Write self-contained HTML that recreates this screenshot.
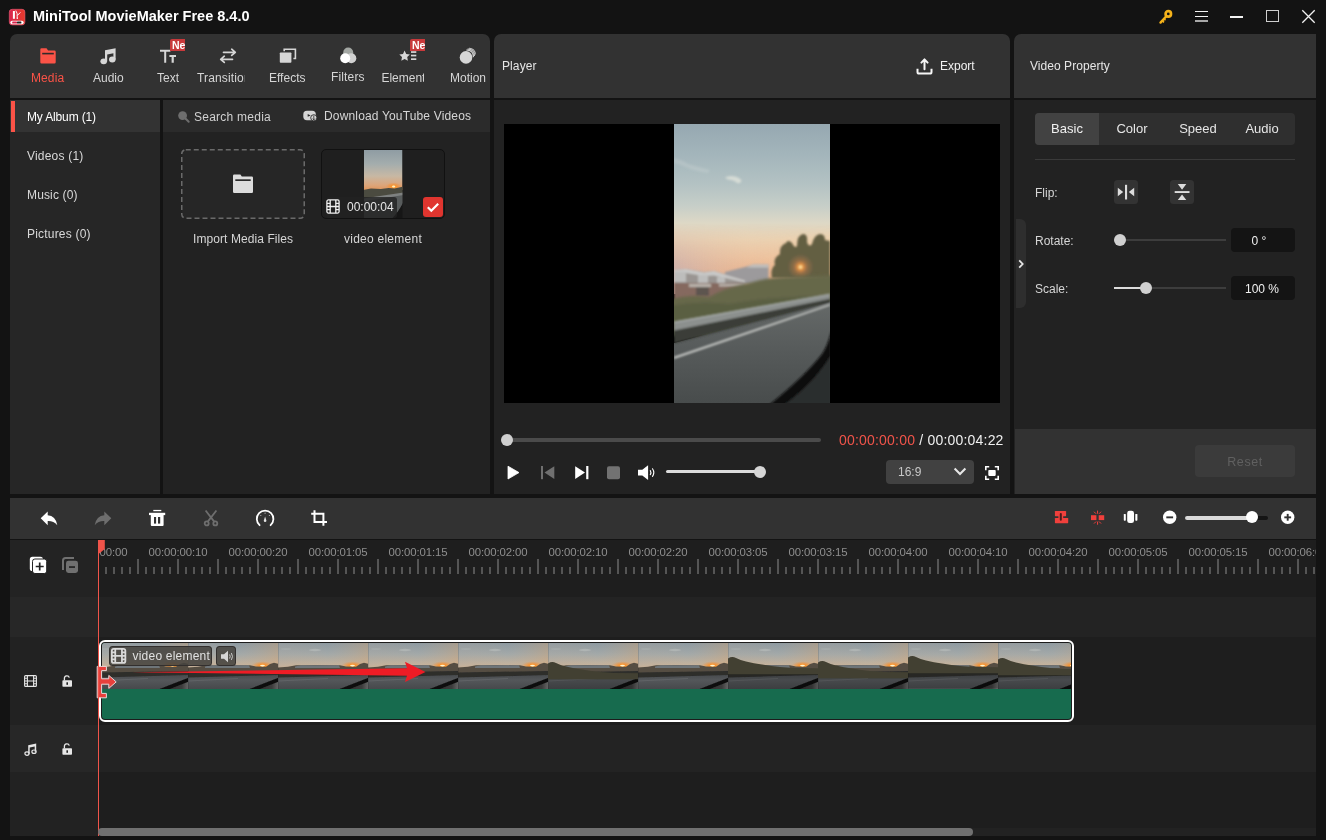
<!DOCTYPE html>
<html lang="en">
<head>
<meta charset="utf-8">
<title>MiniTool MovieMaker Free 8.4.0</title>
<style>
*{box-sizing:border-box;margin:0;padding:0}
html,body{width:1326px;height:840px;overflow:hidden;background:#131313}
body{position:relative;font-family:"Liberation Sans",Arial,sans-serif;font-size:12px;color:#e0e0e0;-webkit-font-smoothing:antialiased}
.abs{position:absolute}
.t{position:absolute;white-space:nowrap;line-height:16px}
svg{position:absolute;overflow:visible}
/* title */
#title{left:33px;top:7px;font-weight:bold;font-size:14.5px;line-height:18px;color:#fff}
/* panels */
.hdr{background:#323232;border-radius:7px 7px 0 0}
.body{background:#222222}
/* tabs */
.tab{position:absolute;top:69px;width:70px;text-align:center;font-size:12px;line-height:16px;color:#d6d6d6;white-space:nowrap}
.side{position:absolute;left:27px;font-size:12px;line-height:16px;color:#d8d8d8;white-space:nowrap}
.new{position:absolute;width:15px;height:11px;background:#c8393b;color:#fff;font-weight:bold;font-size:10.5px;line-height:12px;height:12px;overflow:hidden;padding-left:2px;border-radius:2px 0 0 0}
.rl{position:absolute;top:543.600px;width:80px;text-align:center;font-size:11.4px;line-height:16px;color:#8e8e8e;white-space:nowrap;letter-spacing:-0.1px}
</style>
</head>
<body>
<div id="app" style="position:absolute;left:0;top:0;width:1326px;height:840px;will-change:transform;transform:translateZ(0)">

<svg width="0" height="0" style="position:absolute;left:0;top:0">
<defs>
<linearGradient id="sky" x1="0" y1="0" x2="0" y2="1">
<stop offset="0" stop-color="#96a8b1"/><stop offset="0.18" stop-color="#a3b5bb"/><stop offset="0.35" stop-color="#b3c2c3"/><stop offset="0.48" stop-color="#c6cec8"/><stop offset="0.58" stop-color="#ddd8c6"/><stop offset="0.68" stop-color="#ecd3b3"/><stop offset="0.78" stop-color="#f0c5a0"/><stop offset="0.87" stop-color="#eeb48c"/><stop offset="1" stop-color="#e6a07a"/>
</linearGradient>
<linearGradient id="skyx" x1="0" y1="0" x2="1" y2="0"><stop offset="0" stop-color="#c4b0b4" stop-opacity=".7"/><stop offset="0.5" stop-color="#dcbca4" stop-opacity=".2"/><stop offset="1" stop-color="#f8c88c" stop-opacity=".4"/></linearGradient>
<linearGradient id="skym" x1="0" y1="0" x2="0" y2="1"><stop offset="0" stop-color="#fff" stop-opacity="0"/><stop offset="0.6" stop-color="#fff" stop-opacity="1"/></linearGradient>
<mask id="skymask"><rect y="100" width="156" height="70" fill="url(#skym)"/></mask>
<linearGradient id="road" x1="0" y1="0" x2="0" y2="1"><stop offset="0" stop-color="#666a69"/><stop offset="0.5" stop-color="#565a5a"/><stop offset="1" stop-color="#484c4c"/></linearGradient>
<radialGradient id="sun"><stop offset="0" stop-color="#ffd27a"/><stop offset="0.2" stop-color="#f59a44" stop-opacity=".9"/><stop offset="0.5" stop-color="#d8844a" stop-opacity=".4"/><stop offset="1" stop-color="#c88050" stop-opacity="0"/></radialGradient>
<filter id="b1" x="-10%" y="-10%" width="120%" height="120%"><feGaussianBlur stdDeviation="0.9"/></filter>
<filter id="b2" x="-10%" y="-10%" width="120%" height="120%"><feGaussianBlur stdDeviation="1.8"/></filter>
<clipPath id="pc"><rect width="156" height="279"/></clipPath>

<linearGradient id="tsky" x1="0" y1="0" x2="0" y2="1"><stop offset="0" stop-color="#8e9aa1"/><stop offset="0.35" stop-color="#a3a9a9"/><stop offset="0.7" stop-color="#c6b39c"/><stop offset="1" stop-color="#d8a77a"/></linearGradient>
<linearGradient id="tskx" x1="0" y1="0" x2="1" y2="0"><stop offset="0" stop-color="#b0a8a0" stop-opacity=".2"/><stop offset="0.55" stop-color="#d0a880" stop-opacity="0"/><stop offset="1" stop-color="#f0a050" stop-opacity=".25"/></linearGradient>
<linearGradient id="troad" x1="0" y1="0" x2="0" y2="1"><stop offset="0" stop-color="#46494b"/><stop offset="0.4" stop-color="#54575a"/><stop offset="1" stop-color="#47494c"/></linearGradient>
<linearGradient id="tdoor" x1="0" y1="0" x2="1" y2="0"><stop offset="0" stop-color="#2c2c2c"/><stop offset="0.7" stop-color="#3c3c3c"/><stop offset="1" stop-color="#6a6a6a"/></linearGradient>
<radialGradient id="tsun"><stop offset="0" stop-color="#ffd070"/><stop offset="0.3" stop-color="#f89430"/><stop offset="1" stop-color="#ee9040" stop-opacity="0"/></radialGradient>
<filter id="b0" x="-5%" y="-20%" width="110%" height="140%"><feGaussianBlur stdDeviation="0.6"/></filter>
<symbol id="thumb" viewBox="0 0 90 46" width="90" height="46" preserveAspectRatio="none">
<rect width="90" height="32" fill="url(#tsky)"/>
<rect y="0" width="90" height="30" fill="url(#tskx)"/>
<g filter="url(#b0)">
<ellipse cx="37" cy="7" rx="6" ry="1.200" fill="#c4c8c6" opacity=".45"/>
<ellipse cx="8" cy="6" rx="5" ry="1" fill="#b4babb" opacity=".3"/>
<ellipse cx="74.500" cy="22.800" rx="11" ry="4.500" fill="url(#tsun)"/>
<path d="M0 24.500l10-.8 8-1.400 20-.3 24 .2 6 1.300 10 .2 4-2.800 4-1.200 4 1v13H0z" fill="#554e42"/>
<path d="M17 23.500l6-1.200h38l1 2.700H17z" fill="#737b82" opacity=".85"/>
<ellipse cx="74.500" cy="22.600" rx="2.400" ry="0.800" fill="#fff4d0"/>
</g>
<rect y="31" width="90" height="15" fill="url(#troad)"/>
<g filter="url(#b0)">
<path d="M0 29.500L90 28v4L0 34.500z" fill="#2d2d2b"/>
<path d="M0 38l50-2.500" stroke="#6a6d70" stroke-width="1" opacity=".6"/>
<path d="M67 47L91 38V47z" fill="url(#tdoor)"/>
<path d="M59 47L91 34.500V38.500L69 47z" fill="#0e0e0e"/>
</g>
<rect x="0" width="0.600" height="46" fill="#000" opacity=".2"/>
</symbol>
<linearGradient id="p2sky" x1="0" y1="0" x2="0" y2="1"><stop offset="0" stop-color="#8f9ca3"/><stop offset="0.35" stop-color="#a4adad"/><stop offset="0.65" stop-color="#c7b8a4"/><stop offset="0.88" stop-color="#dca57a"/><stop offset="1" stop-color="#e0945a"/></linearGradient>
<symbol id="ttrees" viewBox="0 0 90 46" width="90" height="46" preserveAspectRatio="none"><g filter="url(#b0)"><path d="M0 15.500q4-2.500 8-.5q5 2.500 10 3.500q8 2 16 3q10 1.500 18 2.500l14 1 24 .3v6H0z" fill="#424032"/><rect y="31" width="90" height="15" fill="#000" opacity=".15"/></g></symbol>
<symbol id="photo2" viewBox="0 0 39 69" preserveAspectRatio="none">
<rect width="39" height="40" fill="url(#p2sky)"/>
<g filter="url(#b0)">
<ellipse cx="30" cy="36.500" rx="8" ry="4" fill="url(#tsun)"/>
<ellipse cx="30" cy="36.500" rx="1.600" ry="1" fill="#fff0c0"/>
<path d="M-1 40l8-1.500 10 .5 8-1 6 .5 9-2v16H-1z" fill="#4c4b40"/>
<path d="M-1 50L40 44v26H-1z" fill="#585b5c"/>
<path d="M-1 48.500L40 42.500v2.500L-1 51.500z" fill="#7e8180"/>
<path d="M27 70Q35 62 40 52V70z" fill="#151515"/>
</g>
</symbol>
<symbol id="photo" viewBox="0 0 156 279" preserveAspectRatio="none">
<g clip-path="url(#pc)">
<rect width="156" height="170" fill="url(#sky)"/>
<rect y="100" width="156" height="70" fill="url(#skyx)" mask="url(#skymask)"/>
<g filter="url(#b1)">
<path d="M0 34q8 2 14 6q10 3 22 6l-2 3q-14-2-22-6q-7-3-12-4z" fill="#cfd6d6" opacity=".3"/>
<path d="M51 53.500q5-2.500 10-1q5 1.500 6.500 4q-1 3.500-4.500 2.500q-2.500-2.500-6-3q-3.500 0-6-2.500z" fill="#e2e4dc" opacity=".75"/>
</g>
<!-- buildings -->
<g filter="url(#b1)">
<path d="M51 148l20-5 8-2.500h15.500v20H51z" fill="#9c9a9c"/>
<path d="M72 143.500l7-3h15.500v3z" fill="#c2c0be"/>
<path d="M0 146l12-1 18 3 10-1 14 4 17 5v22H0z" fill="#9a9592"/>
<path d="M0 146l12-1 18 3.500 10-1.500 14 4.500 17 5v2l-17-4-14-3-10 .5-18-3-12 .5z" fill="#c9c9c8"/>
<path d="M0 148h12v10H0zM24 151h10v8h-10zM43 153h8v7h-8z" fill="#bdbdbc"/>
<path d="M0 159h70v18H0z" fill="#85695f"/>
<path d="M15 160h22v3H15zM45 160h25v2.500H45z" fill="#b9b3ac"/>
<path d="M22 163h13v9H22z" fill="#5d5550"/>
</g>
<!-- tree -->
<g filter="url(#b1)">
<path d="M98 154q-2-9 3-13q-2-7 5-11q-1-8 6-11q2-4 6 0q3 6 5 3q0-11 6-12q5 0 4 8q2 6 5 2q2-9 8-10q5 0 5 6l5 1v38z" fill="#645f43"/>
<circle cx="126.500" cy="143" r="13" fill="url(#sun)"/>
<circle cx="126.500" cy="143" r="1.600" fill="#ffe7a0"/>
</g>
<!-- vegetation -->
<g filter="url(#b2)">
<path d="M-5 176q20-6 40-3q18-10 40-14q20-6 40-6l45-2v60H-5z" fill="#66674a"/>
<path d="M-5 182q30-6 60-2q40-8 105-8v40H-5z" fill="#5a5e42"/>
</g>
<!-- road -->
<path d="M0 219L156 177V279H0z" fill="url(#road)"/>
<g filter="url(#b1)">
<path d="M0 206L156 174.500v4L0 219.500z" fill="#3b3d39"/>
<path d="M0 197.500L156 169.800v5L0 206.500z" fill="#8c908e"/>
<path d="M0 197.500L156 169.800v1.300L0 199z" fill="#a7abaa"/>
<path d="M0 232.700L156 180v1.600L0 235z" fill="#c9cbc8"/>
</g>
<!-- car frame -->
<g filter="url(#b1)">
<path d="M95 281Q130 253 148 230Q154 221 157 207V281z" fill="#101010"/>
<path d="M110 281Q141 258 157 231V281z" fill="#2c2d2d"/>
</g>
</g>
</symbol>
</defs>
</svg>

<!-- ===== TITLE BAR ===== -->
<div id="titlebar" class="abs" style="left:0;top:0;width:1326px;height:34px;background:#131313"></div>

<svg style="left:9px;top:9px" width="16" height="16" viewBox="0 0 16 16"><defs><linearGradient id="lg" x1="0" y1="0" x2="1" y2="0"><stop offset="0" stop-color="#d9264e"/><stop offset="1" stop-color="#e83b2b"/></linearGradient></defs><rect x="0.300" y="0.300" width="15.600" height="15.600" rx="2.800" fill="url(#lg)" stroke="#f0607a" stroke-width="0.600"/><rect x="3.900" y="2" width="2" height="7.800" fill="#fff"/><path d="M6.800 1.600l1.400 3.200v4.600" stroke="#fff" stroke-width="0.900" fill="none"/><path d="M8.400 6.400l3-3" stroke="#fff" stroke-width="1" fill="none"/><circle cx="8.300" cy="9.300" r=".7" fill="#fff"/><rect x="1.300" y="11.800" width="13.400" height="3.500" rx="1.750" fill="#fff"/><rect x="3.200" y="12.600" width="4.800" height="1.900" rx=".6" fill="#d9264e"/><rect x="8" y="12.600" width="4.400" height="1.900" rx=".6" fill="#222"/></svg>
<div id="title" class="t">MiniTool MovieMaker Free 8.4.0</div>


<svg style="left:1159px;top:9px" width="15" height="15" viewBox="0 0 15 15"><path d="M1.500 13.600L7.300 7.300" stroke="#f5b21a" stroke-width="2.400" stroke-linecap="round"/><path d="M3.200 11.600l1.800 1.800M5 9.800l1.500 1.500" stroke="#f5b21a" stroke-width="1.500"/><circle cx="9.300" cy="4.900" r="2.700" fill="none" stroke="#f5b21a" stroke-width="2.700"/></svg>
<div class="abs" style="left:1195px;top:11px;width:13px;height:1.400px;background:#f2f2f2"></div>
<div class="abs" style="left:1195px;top:15.700px;width:13px;height:1.400px;background:#f2f2f2"></div>
<div class="abs" style="left:1195px;top:20px;width:13px;height:1.800px;background:#a8a8a8"></div>
<div class="abs" style="left:1230px;top:15.700px;width:13px;height:2px;background:#f2f2f2"></div>
<div class="abs" style="left:1265.500px;top:9.500px;width:13.500px;height:12.500px;border:1px solid #cfcfcf"></div>
<svg style="left:1302px;top:10px" width="13" height="13" viewBox="0 0 13 13"><path d="M0.300 0.300L12.700 12.700M12.700 0.300L0.300 12.700" stroke="#f2f2f2" stroke-width="1.300"/></svg>

<!-- ===== LEFT PANEL ===== -->
<div class="abs hdr" style="left:10px;top:34px;width:480px;height:64px"></div>
<div class="abs" style="left:10px;top:100px;width:149.500px;height:394px;background:#262626"></div>
<div class="abs" style="left:10px;top:100px;width:149.500px;height:32px;background:#333333"></div>
<div class="abs" style="left:11px;top:101px;width:4px;height:31px;background:#fb5347"></div>
<div class="abs" style="left:162.500px;top:100px;width:327.500px;height:394px;background:#222222"></div>
<div class="abs" style="left:162.500px;top:100px;width:327.500px;height:32px;background:#2b2b2b"></div>


<!-- tabs -->
<svg style="left:40px;top:48px" width="16" height="16" viewBox="0 0 16 16"><path d="M1.5 0.3h5l1.6 2.2h6.4a1.2 1.2 0 0 1 1.2 1.2v10.6a1.2 1.2 0 0 1-1.2 1.2h-13a1.2 1.2 0 0 1-1.2-1.2v-12.8a1.2 1.2 0 0 1 1.2-1.2z" fill="#fb5347"/><rect x="2.2" y="4.8" width="11.6" height="1.6" fill="#322a2a"/></svg>
<div class="t" style="left:31px;top:70px;color:#fb5347;letter-spacing:.1px">Media</div>

<svg style="left:100px;top:48px" width="17" height="17" viewBox="0 0 17 17"><path d="M5 2.2L15.6 0.3v11.2h-2.2V5.2L7.2 6.4v7.2H5z" fill="#d6d6d6"/><ellipse cx="3.7" cy="13.3" rx="3.3" ry="2.9" fill="#d6d6d6"/><ellipse cx="12.3" cy="11.5" rx="3.3" ry="2.9" fill="#d6d6d6"/></svg>
<div class="t" style="left:93px;top:70px;color:#d6d6d6">Audio</div>

<svg style="left:160px;top:49px" width="17" height="15" viewBox="0 0 17 15"><path d="M0 0.8h10.4v2H6.2v11h-2v-11H0z" fill="#d6d6d6"/><path d="M9.4 6h6.6v2.1h-2.2v5.7h-2.2V8.1H9.4z" fill="#d6d6d6"/></svg>
<div class="new" style="left:170px;top:39px">New</div>
<div class="t" style="left:157px;top:70px;color:#d6d6d6">Text</div>

<svg style="left:219px;top:48px" width="18" height="16" viewBox="0 0 18 16" fill="none" stroke="#d6d6d6" stroke-width="1.7" stroke-linecap="round" stroke-linejoin="round"><path d="M4.5 4.3h11.7M12.7 1.2l3.6 3.1-3.6 3.1"/><path d="M13.5 11.3H1.8M5.3 8.2l-3.6 3.1 3.6 3.1"/></svg>
<div class="t" style="left:197px;top:70px;color:#d6d6d6;width:47.500px;overflow:hidden;letter-spacing:.15px">Transition</div>

<svg style="left:279px;top:48px" width="18" height="16" viewBox="0 0 18 16"><path d="M5.2 3.2V1.3h11.2v9.2h-2" fill="none" stroke="#d6d6d6" stroke-width="1.6"/><rect x="0.8" y="4.5" width="11.6" height="10.3" rx="0.8" fill="#d6d6d6"/></svg>
<div class="t" style="left:269px;top:70px;color:#d6d6d6">Effects</div>

<svg style="left:340px;top:47px" width="17" height="17" viewBox="0 0 17 17"><circle cx="8.2" cy="5.6" r="5" fill="#a3a7a3"/><circle cx="11.3" cy="11.2" r="5" fill="#d2d2d2"/><circle cx="5.2" cy="11.2" r="5" fill="#ffffff"/></svg>
<div class="t" style="left:331px;top:69px;color:#d6d6d6;letter-spacing:.15px">Filters</div>

<svg style="left:399px;top:50px" width="18" height="12" viewBox="0 0 18 12"><path d="M5.6 0.6l1.6 3.4 3.7.5-2.7 2.6.7 3.7-3.3-1.8-3.3 1.8.7-3.7L.3 4.5l3.7-.5z" fill="#d6d6d6"/><rect x="12" y="1.2" width="5.3" height="1.7" fill="#d6d6d6"/><rect x="12" y="4.7" width="5.3" height="1.7" fill="#d6d6d6"/><rect x="12" y="8.3" width="5.3" height="1.7" fill="#d6d6d6"/></svg>
<div class="new" style="left:410px;top:39px">New</div>
<div class="t" style="left:381.400px;top:70px;color:#d6d6d6;width:43px;overflow:hidden">Elements</div>

<svg style="left:459px;top:47px" width="18" height="18" viewBox="0 0 18 18"><path d="M10 1.2a6 6 0 0 1 6.3 6.3" fill="none" stroke="#bdbdbd" stroke-width="1.1"/><path d="M8.6 2.2a6 6 0 0 1 6.8 6.8" fill="none" stroke="#c8c8c8" stroke-width="1.2"/><path d="M7.4 3.2a6 6 0 0 1 7 7" fill="none" stroke="#d0d0d0" stroke-width="1.3"/><circle cx="7" cy="10.4" r="6.3" fill="#d6d6d6"/></svg>
<div class="t" style="left:450px;top:70px;color:#d6d6d6">Motion</div>

<!-- sidebar -->
<div class="side" style="top:109px;color:#fff;letter-spacing:-.15px">My Album (1)</div>
<div class="side" style="top:148px;letter-spacing:.2px">Videos (1)</div>
<div class="side" style="top:187px;letter-spacing:.15px">Music (0)</div>
<div class="side" style="top:226px;letter-spacing:.2px">Pictures (0)</div>

<!-- search row -->
<svg style="left:177px;top:110px" width="13" height="13" viewBox="0 0 13 13"><circle cx="5.6" cy="5.6" r="4.4" fill="#6e6e6e"/><path d="M8.5 8.5l3.2 3.2" stroke="#6e6e6e" stroke-width="2" stroke-linecap="round"/></svg>
<div class="t" style="left:194px;top:109px;color:#d0d0d0;letter-spacing:.25px">Search media</div>
<svg style="left:302.500px;top:110px" width="15" height="13" viewBox="0 0 15 13"><rect x="0.300" y="0.800" width="12.500" height="9.400" rx="3.600" fill="#d6d6d6"/><path d="M4.700 4l2.900 1.400-2.900 1.400z" fill="#2b2b2b"/><circle cx="10.800" cy="7.800" r="3.100" fill="#d6d6d6" stroke="#2b2b2b" stroke-width="0.900"/><path d="M10.800 5.600v4.200M9.700 8.600l1.100 1.300 1.100-1.300" stroke="#2b2b2b" stroke-width="0.800" fill="none"/></svg>
<div class="t" style="left:324px;top:108px;color:#d6d6d6;letter-spacing:.16px">Download YouTube Videos</div>

<!-- import box -->
<svg style="left:181px;top:149px" width="124" height="70" viewBox="0 0 124 70"><rect x="0.75" y="0.75" width="122.5" height="68.5" rx="4" fill="#262626" stroke="#6a6a6a" stroke-width="1.5" stroke-dasharray="5 3"/><path d="M53.2 25.5h6.2l1.4 2h10a1.2 1.2 0 0 1 1.2 1.2v14.100a1.200 1.200 0 0 1-1.200 1.200h-17.600a1.200 1.200 0 0 1-1.200-1.200v-16.100a1.200 1.200 0 0 1 1.200-1.200z" fill="#dcdcdc"/><rect x="54.300" y="30.300" width="15.400" height="1.700" fill="#2a2a2a"/></svg>
<div class="t" style="left:193px;top:231px;color:#d6d6d6;letter-spacing:.08px">Import Media Files</div>

<!-- video thumb -->
<div class="abs" style="left:321px;top:149px;width:124px;height:70px;border:1px solid #111;border-radius:5px;background:#1f1f1f;overflow:hidden">
  <svg style="left:41.500px;top:0" width="38.500" height="69" viewBox="0 0 39 69" preserveAspectRatio="none"><use href="#photo2"/></svg>
  <div class="abs" style="left:4px;top:47px;width:71px;height:21px;background:rgba(34,34,34,.8);border-radius:3px"></div>
</div>
<svg style="left:326px;top:199px" width="14" height="15" viewBox="0 0 14 15" fill="none" stroke="#f0f0f0" stroke-width="1.3"><rect x="0.9" y="0.9" width="12.200" height="13.200" rx="1.5"/><path d="M4.200 1v13M9.800 1v13M4.200 7.500h5.600M1 4.300h3M1 7.500h3M1 10.700h3M10 4.300h3M10 7.500h3M10 10.700h3"/></svg>
<div class="t" style="left:347px;top:199px;color:#e6e6e6">00:00:04</div>
<svg style="left:423px;top:197px" width="20" height="20" viewBox="0 0 20 20"><rect width="20" height="20" rx="3" fill="#e0352f"/><path d="M4.800 10.300l3.500 3.400 6.900-7" fill="none" stroke="#fff" stroke-width="2.200"/></svg>
<div class="t" style="left:344px;top:231px;color:#d6d6d6;letter-spacing:.25px">video element</div>

<!-- ===== PLAYER PANEL ===== -->
<div class="abs hdr" style="left:494px;top:34px;width:516px;height:64px"></div>
<div class="abs body" style="left:494px;top:100px;width:516px;height:394px"></div>
<div class="abs" style="left:504px;top:124px;width:496px;height:279px;background:#000"></div>
<svg style="left:674px;top:124px" width="156" height="279" viewBox="0 0 156 279"><use href="#photo"/></svg>


<div class="t" style="left:502px;top:58px;color:#e6e6e6;letter-spacing:.1px">Player</div>
<svg style="left:915.500px;top:57.500px" width="17" height="17" viewBox="0 0 17 17" fill="none" stroke="#f6f6f6" stroke-width="2"><path d="M1.500 10.700v3.200a1.600 1.600 0 0 0 1.600 1.600h10.800a1.600 1.600 0 0 0 1.600-1.600v-3.200"/><path d="M8.500 11.300V1.800M5.400 4.600l3.100-3.200 3.100 3.200" stroke-linecap="round" stroke-linejoin="round"/></svg>
<div class="t" style="left:940px;top:58px;color:#f0f0f0">Export</div>

<div class="abs" style="left:507px;top:438px;width:314px;height:4px;border-radius:2px;background:#4b4b4b"></div>
<div class="abs" style="left:501px;top:434px;width:12px;height:12px;border-radius:6px;background:#cfcfcf"></div>
<div class="t" style="left:839px;top:431px;font-size:14px;line-height:18px;color:#f0f0f0;letter-spacing:.2px"><span style="color:#f0544a">00:00:00:00</span> / 00:00:04:22</div>

<svg style="left:507px;top:465px" width="150" height="16" viewBox="0 0 150 16">
<path d="M1 1.200v12.800l11-6.400z" fill="#fff" stroke="#fff" stroke-width="0.800" stroke-linejoin="round"/>
<rect x="34" y="1" width="2" height="13.200" fill="#707070"/><path d="M47.300 1.200v12.800l-9.800-6.400z" fill="#707070"/>
<path d="M68.200 1.200v12.800l9.800-6.400z" fill="#fff"/><rect x="79.200" y="1" width="2.200" height="13.200" fill="#fff"/>
<rect x="100" y="1.200" width="13" height="13" rx="2" fill="#727272"/>
<path d="M131 4.700h4.300l5.800-4.500v14.800l-5.800-4.500H131z" fill="#fff"/><path d="M143.300 5.600q1.300 2 0 4M145.500 3.800q2.600 3.800 0 7.600" fill="none" stroke="#fff" stroke-width="1.100" stroke-linecap="round"/>
</svg>
<div class="abs" style="left:666px;top:470px;width:94px;height:3px;border-radius:1.500px;background:#dcdcdc"></div>
<div class="abs" style="left:754px;top:466px;width:12px;height:12px;border-radius:6px;background:#d6d6d6"></div>

<div class="abs" style="left:886px;top:460px;width:88px;height:24px;border-radius:4px;background:#414141"></div>
<div class="t" style="left:898px;top:464px;color:#c8c8c8">16:9</div>
<svg style="left:953px;top:467px" width="14" height="9" viewBox="0 0 14 9"><path d="M1.600 1.600l5.400 5.400 5.400-5.400" fill="none" stroke="#e6e6e6" stroke-width="2.100"/></svg>
<svg style="left:985px;top:466px" width="14" height="14" viewBox="0 0 14 14"><path d="M0.800 4.200V0.800h3.400M9.800 0.800h3.400v3.400M13.200 9.800v3.400H9.800M4.200 13.200H0.800V9.800" fill="none" stroke="#fff" stroke-width="1.600"/><rect x="3.300" y="3.900" width="7.400" height="6" rx="0.800" fill="#fff"/></svg>

<!-- ===== PROPERTY PANEL ===== -->
<div class="abs hdr" style="left:1014px;top:34px;width:302px;height:64px;border-radius:7px 0 0 0"></div>
<div class="abs body" style="left:1014px;top:100px;width:302px;height:394px"></div>
<div class="abs" style="left:1015px;top:429px;width:301px;height:65px;background:#323232"></div>



<div class="t" style="left:1030px;top:58px;color:#e6e6e6;letter-spacing:.05px">Video Property</div>
<div class="abs" style="left:1035px;top:113px;width:260px;height:32px;border-radius:4px;background:#2f2f2f"></div>
<div class="abs" style="left:1035px;top:113px;width:64px;height:32px;border-radius:4px 0 0 4px;background:#424242"></div>
<div class="t" style="left:1037px;top:121px;width:60px;text-align:center;font-size:13px;color:#f0f0f0">Basic</div>
<div class="t" style="left:1102px;top:121px;width:60px;text-align:center;font-size:13px;color:#e6e6e6">Color</div>
<div class="t" style="left:1168px;top:121px;width:60px;text-align:center;font-size:13px;color:#e6e6e6">Speed</div>
<div class="t" style="left:1232px;top:121px;width:60px;text-align:center;font-size:13px;color:#e6e6e6">Audio</div>
<div class="abs" style="left:1035px;top:159px;width:260px;height:1px;background:#3a3a3a"></div>

<div class="t" style="left:1035px;top:185px;color:#d6d6d6">Flip:</div>
<div class="abs" style="left:1114px;top:180px;width:24px;height:24px;border-radius:3.500px;background:#333"></div>
<svg style="left:1114px;top:180px" width="24" height="24" viewBox="0 0 24 24" fill="#dcdcdc"><rect x="11" y="4.800" width="2.100" height="14.700"/><path d="M3.800 7.800v8.400l5.400-4.200zM20.200 7.800v8.400l-5.400-4.200z"/></svg>
<div class="abs" style="left:1170px;top:180px;width:24px;height:24px;border-radius:3.500px;background:#333"></div>
<svg style="left:1170px;top:180px" width="24" height="24" viewBox="0 0 24 24" fill="#dcdcdc"><rect x="4.700" y="11.100" width="14.800" height="1.900"/><path d="M7.800 4.100h8.500l-4.250 5.700zM7.800 19.900h8.500l-4.250-5.500z"/></svg>

<div class="t" style="left:1035px;top:233px;color:#d6d6d6">Rotate:</div>
<div class="abs" style="left:1114px;top:239px;width:112px;height:2px;background:#3d3d3d"></div>
<div class="abs" style="left:1114px;top:234px;width:12px;height:12px;border-radius:6px;background:#d0d0d0"></div>
<div class="abs" style="left:1231px;top:228px;width:64px;height:24px;border-radius:4px;background:#141414"></div>
<div class="t" style="left:1231px;top:233px;width:56px;text-align:center;color:#f0f0f0">0 °</div>

<div class="t" style="left:1035px;top:281px;color:#d6d6d6">Scale:</div>
<div class="abs" style="left:1114px;top:287px;width:112px;height:2px;background:#3d3d3d"></div>
<div class="abs" style="left:1114px;top:287px;width:32px;height:2px;background:#dcdcdc"></div>
<div class="abs" style="left:1140px;top:282px;width:12px;height:12px;border-radius:6px;background:#d0d0d0"></div>
<div class="abs" style="left:1231px;top:276px;width:64px;height:24px;border-radius:4px;background:#141414"></div>
<div class="t" style="left:1231px;top:281px;width:62px;text-align:center;color:#f0f0f0">100 %</div>

<div class="abs" style="left:1016px;top:219px;width:10px;height:89px;border-radius:0 6px 6px 0;background:#2e2e2e"></div>
<svg style="left:1017.500px;top:259px" width="6" height="10" viewBox="0 0 6 10"><path d="M1.200 1.300l3.500 3.700-3.500 3.700" fill="none" stroke="#e6e6e6" stroke-width="1.800"/></svg>

<div class="abs" style="left:1195px;top:445px;width:100px;height:32px;border-radius:4px;background:#3b3b3b"></div>
<div class="t" style="left:1195px;top:454px;width:100px;text-align:center;color:#606060;font-size:12.500px;letter-spacing:.55px">Reset</div>

<!-- ===== TIMELINE ===== -->
<div class="abs" style="left:10px;top:498px;width:1306px;height:41px;background:#323232"></div>
<div id="tl" class="abs" style="left:10px;top:540px;width:1306px;height:296px;background:#1e1e1e"></div>


<!-- toolbar icons -->
<svg style="left:40px;top:511px" width="18" height="15" viewBox="0 0 18 15"><path d="M0.700 7.300L7.700 0.600V4.300Q15.600 4.800 17.300 14.200Q13.400 9.800 7.700 10.100V14.200Z" fill="#fff"/></svg>
<svg style="left:94px;top:511px" width="18" height="15" viewBox="0 0 18 15"><path d="M17.300 7.300L10.300 0.600V4.300Q2.400 4.800 0.700 14.200Q4.600 9.800 10.300 10.100V14.200Z" fill="#6e6e6e"/></svg>
<svg style="left:149px;top:509px" width="17" height="18" viewBox="0 0 17 18"><rect x="4.300" y="0.900" width="8" height="1.300" fill="#fff"/><rect x="0" y="3.800" width="16.200" height="2.300" fill="#fff"/><path d="M1.800 6h12.800v10a1 1 0 0 1-1 1h-10.800a1 1 0 0 1-1-1z" fill="#fff"/><rect x="5" y="8" width="2.100" height="6.600" fill="#323232"/><rect x="9" y="8" width="2.200" height="6.600" fill="#323232"/></svg>
<svg style="left:203px;top:510px" width="16" height="17" viewBox="0 0 16 17" fill="none" stroke="#6e6e6e" stroke-width="1.800"><path d="M2.600 0.500L11.200 11.600M13.400 0.500L4.800 11.600"/><circle cx="3.700" cy="13.400" r="2"/><circle cx="12.300" cy="13.400" r="2"/></svg>
<svg style="left:255px;top:509px" width="20" height="18" viewBox="0 0 20 18" fill="none"><path d="M4.600 16.200A8.300 8.300 0 1 1 15.600 16.200" stroke="#fff" stroke-width="1.800" stroke-linecap="round"/><path d="M10.100 7.500l1.300 4.300a1.300 1.300 0 0 1-2.600 0z" fill="#e6e6e6"/><circle cx="10.100" cy="4.200" r=".6" fill="#bbb"/><circle cx="5.800" cy="6.500" r=".6" fill="#bbb"/><circle cx="14.400" cy="6.500" r=".6" fill="#bbb"/></svg>
<svg style="left:311px;top:510px" width="16" height="16" viewBox="0 0 16 16" fill="none" stroke="#fff" stroke-width="2"><path d="M3.500 0.200V12H16M0.200 3.700H12.400V15.800"/></svg>

<svg style="left:1054px;top:510px" width="16" height="14" viewBox="0 0 16 14"><rect x="0.900" y="1" width="11.200" height="5.200" rx=".6" fill="#f0403c"/><rect x="0.900" y="8" width="13.300" height="5.200" rx=".6" fill="#f0403c"/><rect x="4.400" y="5" width="4.800" height="4" fill="#f0403c"/><rect x="5.800" y="3.100" width="2" height="7.700" rx="1" fill="#4a1a1a"/></svg>
<svg style="left:1090px;top:510px" width="16" height="15" viewBox="0 0 16 15"><rect x="1" y="5.200" width="5.400" height="4.900" fill="#f0403c"/><rect x="8.700" y="5.200" width="5.500" height="4.900" fill="#f0403c"/><path d="M7.550 1v2.300M7.550 12v2.300M4.300 2l1.500 1.500M10.800 2l-1.500 1.500M4.300 13.300l1.500-1.500M10.800 13.300l-1.500-1.500" stroke="#f0403c" stroke-width="1" stroke-linecap="round"/></svg>
<svg style="left:1123px;top:510px" width="16" height="14" viewBox="0 0 16 14" fill="#fff"><rect x="4.200" y="0.700" width="6.800" height="12.400" rx="2.400"/><rect x="0.800" y="3.900" width="2" height="6.800" rx=".6"/><rect x="12.300" y="3.900" width="2.100" height="6.800" rx=".6"/></svg>
<svg style="left:1163px;top:510px" width="14" height="14" viewBox="0 0 14 14"><circle cx="6.700" cy="7.300" r="6.700" fill="#fff"/><rect x="3.300" y="6.400" width="6.800" height="1.900" fill="#323232"/></svg>
<div class="abs" style="left:1185px;top:516px;width:83px;height:3.500px;border-radius:2px;background:#151515"></div>
<div class="abs" style="left:1185px;top:516px;width:67px;height:3.500px;border-radius:2px;background:#dadada"></div>
<div class="abs" style="left:1246px;top:511px;width:12px;height:12px;border-radius:6px;background:#fff"></div>
<svg style="left:1281px;top:510px" width="14" height="14" viewBox="0 0 14 14"><circle cx="6.700" cy="7.300" r="6.700" fill="#fff"/><rect x="3.300" y="6.400" width="6.800" height="1.900" fill="#323232"/><rect x="5.750" y="3.900" width="1.900" height="6.800" fill="#323232"/></svg>

<!-- rows -->
<div class="abs" style="left:10px;top:540px;width:88px;height:57px;background:#232323"></div>
<div class="abs" style="left:10px;top:597px;width:88px;height:40px;background:#272727"></div>
<div class="abs" style="left:98px;top:597px;width:1218px;height:40px;background:#232323"></div>
<div class="abs" style="left:10px;top:637px;width:88px;height:88px;background:#222222"></div>
<div class="abs" style="left:10px;top:725px;width:88px;height:47px;background:#272727"></div>
<div class="abs" style="left:98px;top:725px;width:1218px;height:47px;background:#232323"></div>
<div class="abs" style="left:10px;top:772px;width:88px;height:64px;background:#222222"></div>

<!-- ruler -->
<div class="abs" style="left:98px;top:540px;width:1218px;height:40px;overflow:hidden">
<div style="position:absolute;left:-98px;top:-540px;width:1326px;height:600px"><div class="rl" style="left:58px">00:00:00:00</div><div class="rl" style="left:138px">00:00:00:10</div><div class="rl" style="left:218px">00:00:00:20</div><div class="rl" style="left:298px">00:00:01:05</div><div class="rl" style="left:378px">00:00:01:15</div><div class="rl" style="left:458px">00:00:02:00</div><div class="rl" style="left:538px">00:00:02:10</div><div class="rl" style="left:618px">00:00:02:20</div><div class="rl" style="left:698px">00:00:03:05</div><div class="rl" style="left:778px">00:00:03:15</div><div class="rl" style="left:858px">00:00:04:00</div><div class="rl" style="left:938px">00:00:04:10</div><div class="rl" style="left:1018px">00:00:04:20</div><div class="rl" style="left:1098px">00:00:05:05</div><div class="rl" style="left:1178px">00:00:05:15</div><div class="rl" style="left:1258px">00:00:06:00</div></div>
<div class="abs" style="left:7px;top:26.800px;width:1216px;height:7.400px;background:repeating-linear-gradient(90deg,#555 0,#555 1.800px,transparent 1.800px,transparent 8px)"></div>
<div class="abs" style="left:-1px;top:19px;width:1224px;height:8px;background:repeating-linear-gradient(90deg,#555 0,#555 1.800px,transparent 1.800px,transparent 40px)"></div>
</div>

<!-- left column icons -->
<svg style="left:29px;top:556px" width="18" height="18" viewBox="0 0 18 18"><rect x="0.800" y="0.800" width="13.200" height="14.200" rx="2.600" fill="#fff"/><rect x="3.500" y="3" width="14.200" height="14.500" rx="2.400" fill="#fff" stroke="#232323" stroke-width="1"/><path d="M10.700 6.500v8M6.700 10.500h8" stroke="#232323" stroke-width="1.700"/></svg>
<svg style="left:62px;top:556px" width="17" height="18" viewBox="0 0 17 18"><path d="M1 14V4.600A2.600 2.600 0 0 1 3.600 2H12" fill="none" stroke="#707070" stroke-width="2"/><rect x="4" y="4.800" width="12" height="12.200" rx="2.400" fill="#707070"/><rect x="7" y="10.200" width="6" height="1.700" fill="#232323"/></svg>

<svg style="left:23.500px;top:675px" width="13" height="12" viewBox="0 0 13 12" fill="none" stroke="#e6e6e6" stroke-width="1.100"><rect x="0.600" y="0.600" width="11.800" height="10.800" rx="1"/><path d="M3.400 0.600v10.800M9.600 0.600v10.800M3.400 6h6.200M0.600 3.300h2.800M0.600 6h2.800M0.600 8.700h2.800M9.600 3.300h2.800M9.600 6h2.800M9.600 8.700h2.800"/></svg>
<svg style="left:61.500px;top:675px" width="11" height="12" viewBox="0 0 11 12"><path d="M2.400 5.500V3.300a2.500 2.500 0 0 1 4.900-.7" fill="none" stroke="#e6e6e6" stroke-width="1.300"/><rect x="0.400" y="5.200" width="9.600" height="6.600" rx=".8" fill="#e6e6e6"/><rect x="4.400" y="7.300" width="1.600" height="2.500" fill="#222"/></svg>
<svg style="left:23.500px;top:742.500px" width="13" height="13" viewBox="0 0 13 13"><path d="M4.200 2.200l8-1.800v8.400h-1.500V3.400L5.700 4.500v6.300H4.200z" fill="#e6e6e6"/><ellipse cx="3" cy="10.600" rx="2.100" ry="1.700" fill="none" stroke="#e6e6e6" stroke-width="1.200"/><ellipse cx="10" cy="8.700" rx="2.100" ry="1.700" fill="none" stroke="#e6e6e6" stroke-width="1.200"/></svg>
<svg style="left:61.500px;top:743px" width="11" height="12" viewBox="0 0 11 12"><path d="M2.400 5.500V3.300a2.500 2.500 0 0 1 4.900-.7" fill="none" stroke="#e6e6e6" stroke-width="1.300"/><rect x="0.400" y="5.200" width="9.600" height="6.600" rx=".8" fill="#e6e6e6"/><rect x="4.400" y="7.300" width="1.600" height="2.500" fill="#272727"/></svg>

<!-- clip -->
<div id="clip" class="abs" style="left:99px;top:640px;width:975px;height:82px;border:2px solid #fff;border-radius:6px;background:#1c1c1c;overflow:hidden">
<div class="abs" style="left:1px;top:1px;right:1px;bottom:1px;border-radius:3px;background:#176b4e;overflow:hidden">
<svg style="left:-4px;top:0;overflow:hidden" width="990" height="46" viewBox="0 0 990 46"><use href="#thumb" x="0" y="0"/><use href="#thumb" x="90" y="0"/><use href="#thumb" x="180" y="0"/><use href="#thumb" x="270" y="0"/><use href="#thumb" x="360" y="0"/><use href="#thumb" x="450" y="0"/><use href="#thumb" x="540" y="0"/><use href="#thumb" x="630" y="0"/><use href="#thumb" x="720" y="0"/><use href="#thumb" x="810" y="0"/><use href="#thumb" x="900" y="0"/><use href="#ttrees" x="450" y="5"/><use href="#ttrees" x="630" y="0"/><use href="#ttrees" x="720" y="4"/><use href="#ttrees" x="810" y="-1"/><use href="#ttrees" x="900" y="1"/></svg>
</div>
</div>
<div class="abs" style="left:109.300px;top:646.200px;width:102.700px;height:19.400px;border:1px solid rgba(48,46,44,.9);border-radius:3.500px;background:rgba(70,67,63,.88)"></div>
<svg style="left:111px;top:648.200px" width="15.200" height="16.200" viewBox="0 0 15 16" fill="none" stroke="#dadada" stroke-width="1.750"><rect x="0.800" y="0.800" width="13.400" height="14" rx="2"/><path d="M4.200 0.800v14M10.800 0.800v14M4.200 7.800h6.600M0.800 4.300h3.400M0.800 7.800h3.400M0.800 11.300h3.400M10.800 4.300h3.400M10.800 7.800h3.400M10.800 11.300h3.400"/></svg>
<div class="t" style="left:132.500px;top:647.800px;color:#e0e0e0;letter-spacing:.22px">video element</div>
<div class="abs" style="left:216px;top:646.200px;width:19.800px;height:19.400px;border:1px solid rgba(48,46,44,.9);border-radius:3.500px;background:rgba(70,67,63,.88)"></div>
<svg style="left:219.500px;top:650px" width="14" height="13" viewBox="0 0 14 13"><path d="M1 4.200h3l4-3.400v11.400l-4-3.400H1z" fill="#d6d6d6"/><path d="M9.800 4.800q1 1.700 0 3.400M11.600 3.400q2 3.100 0 6.200" fill="none" stroke="#d6d6d6" stroke-width="0.900" stroke-linecap="round"/></svg>
<!-- annotation arrow -->
<svg style="left:130px;top:660px" width="300" height="24" viewBox="0 0 300 24"><path d="M2 12.200L277 8.200L275 1.800L295.500 12L275 22L277 15.800Z" fill="#ee1c25"/></svg>
<!-- trim handle -->
<svg style="left:96px;top:665px" width="22" height="35" viewBox="0 0 22 35"><path d="M1.200 1.400H10.400V5.600H5.600V13.800H12.800V10.400L20.200 16.900L12.800 23.400V19.200H5.600V28.400H10.400V32.800H1.200Z" fill="#e8403c" stroke="#e8d8d8" stroke-width="1" stroke-linejoin="round"/></svg>

<!-- playhead -->
<div class="abs" style="left:98px;top:540px;width:1.200px;height:296px;background:#f0544a"></div>
<svg style="left:98px;top:540px" width="8" height="14" viewBox="0 0 8 14"><path d="M0 0H6.800V9L1.200 13.600H0Z" fill="#f0544a"/></svg>
<!-- scrollbar -->
<div class="abs" style="left:99px;top:828px;width:1217px;height:8px;background:#222"></div>
<div class="abs" style="left:98px;top:828px;width:875px;height:8px;border-radius:4px;background:#707070"></div>

</div>
</body>
</html>
